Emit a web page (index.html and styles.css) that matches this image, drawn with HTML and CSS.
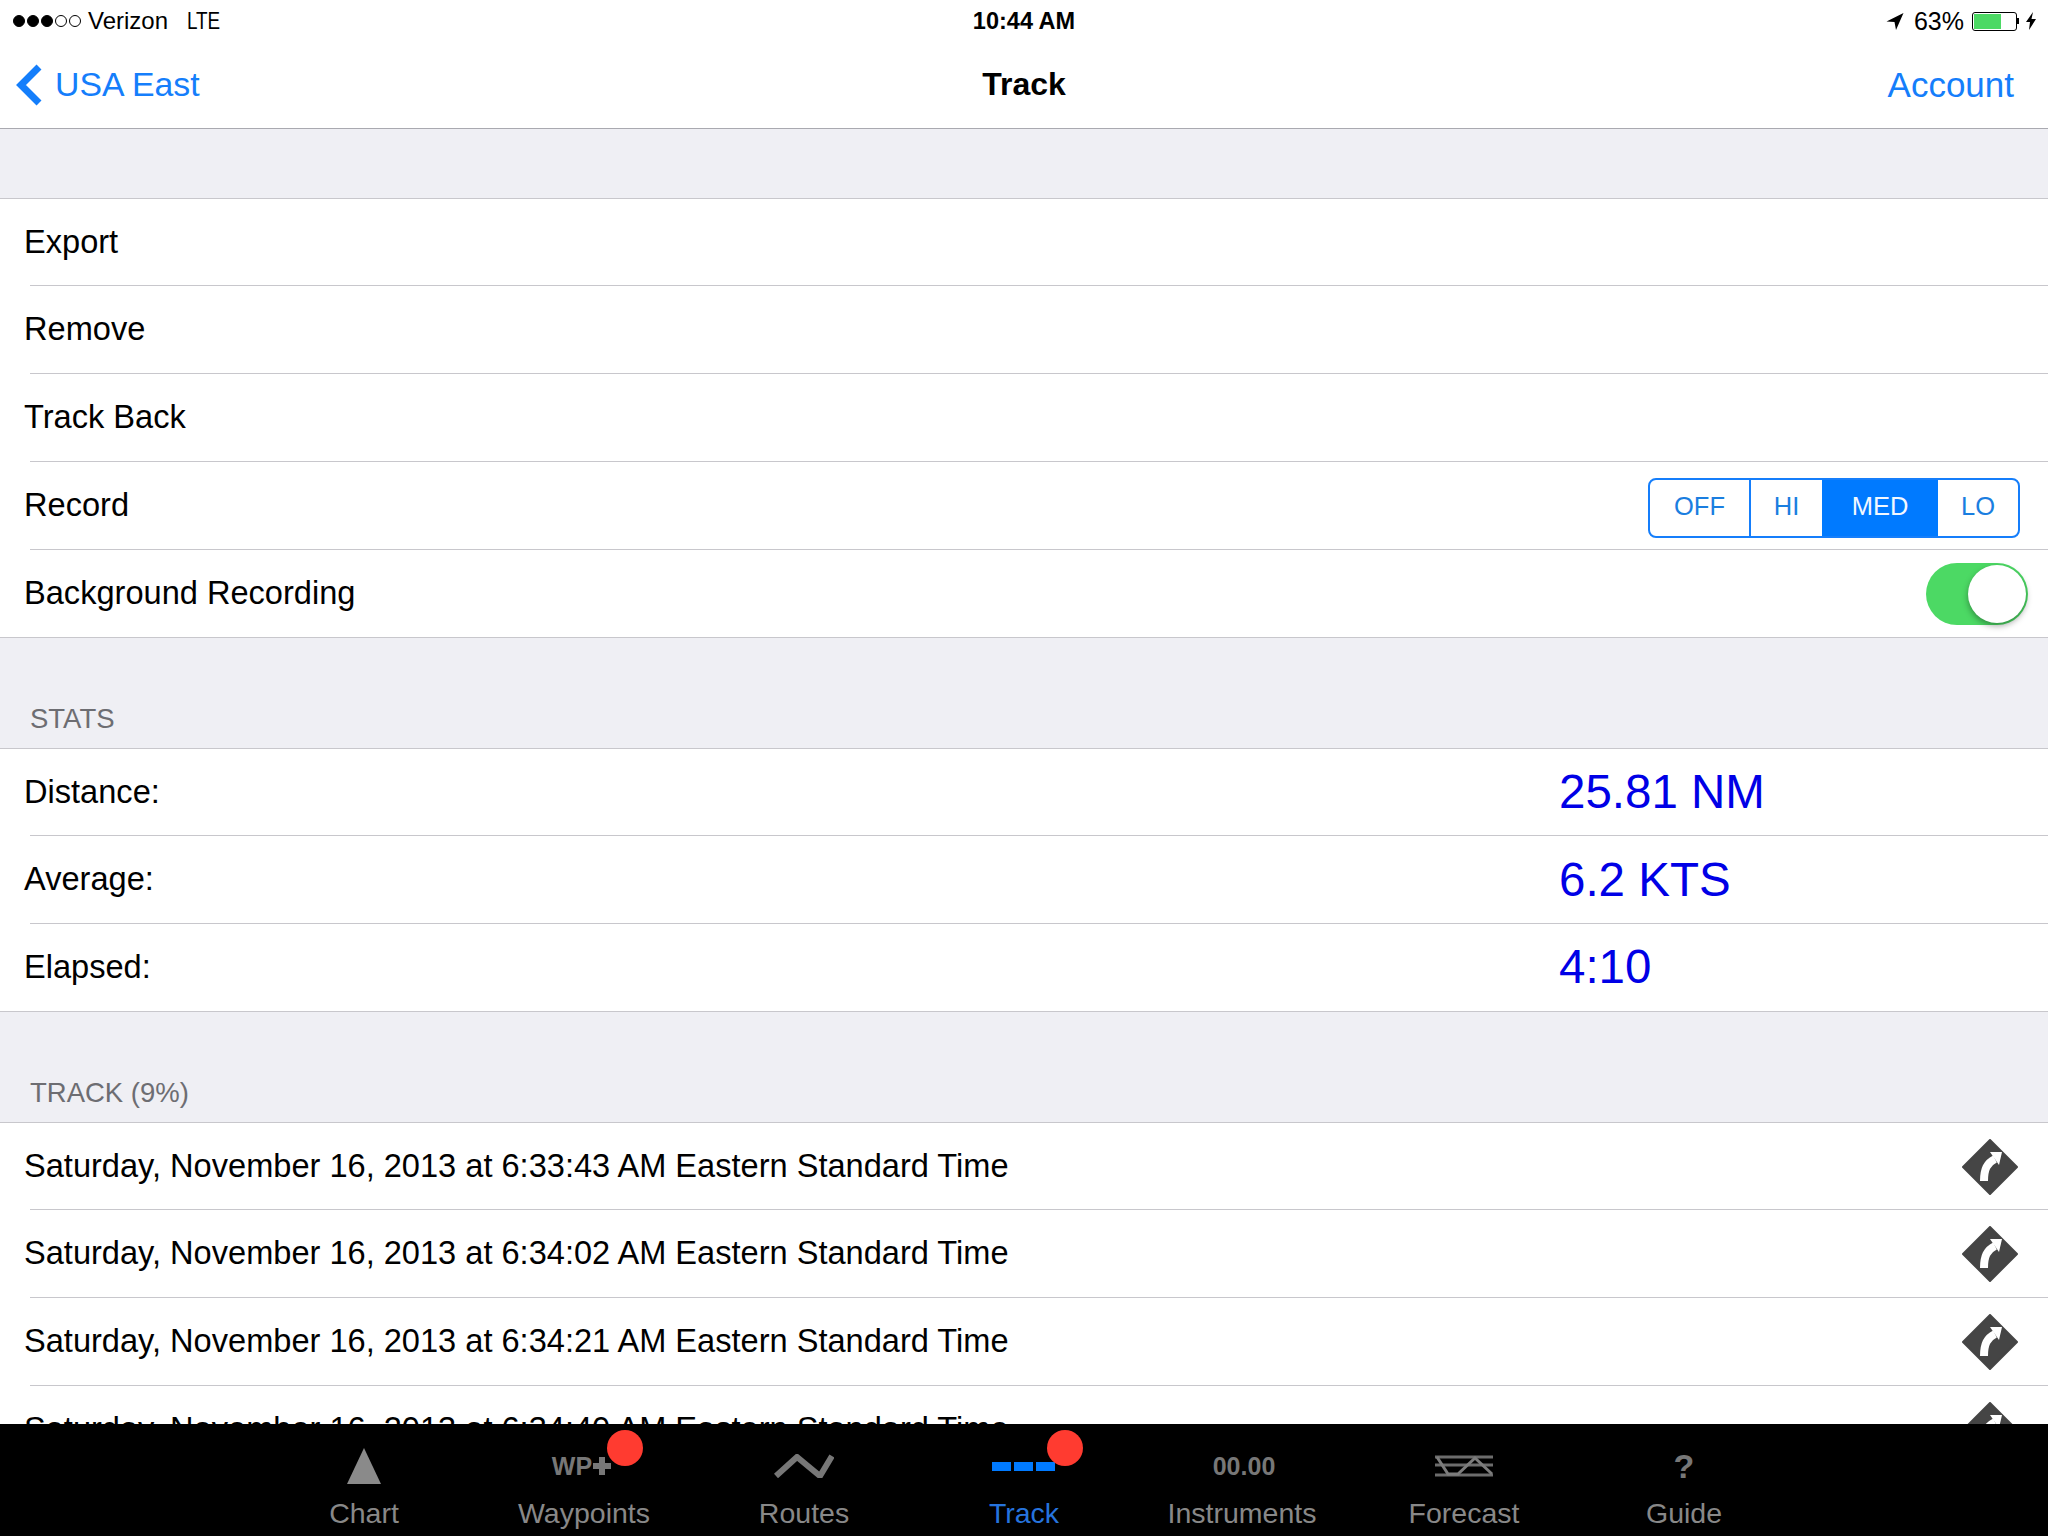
FILE: index.html
```html
<!DOCTYPE html>
<html lang="en">
<head>
<meta charset="utf-8">
<title>Track</title>
<link rel="stylesheet" href="styles.css">
</head>
<body>
<div class="app">
  <header class="top">
    <div class="status">
      <div class="status-left">
        <span class="signal"><i class="dot on"></i><i class="dot on"></i><i class="dot on"></i><i class="dot"></i><i class="dot"></i></span>
        <span class="carrier">Verizon</span>
        <span class="network">LTE</span>
      </div>
      <div class="status-time">10:44 AM</div>
      <div class="status-right">
        <svg class="loc" width="18" height="17" viewBox="0 0 17 17"><path d="M17 0 0 8.500 8 9 9.500 17Z"/></svg>
        <span class="pct">63%</span>
        <span class="battery"><span class="battery-fill"></span></span>
        <span class="nub"></span>
        <svg class="bolt" width="10" height="18" viewBox="0 0 10 18"><path d="M7 0 0 10h4l-1 8 7-11H5.500Z"/></svg>
      </div>
    </div>
    <nav class="nav">
      <div class="nav-back">
        <svg class="chevron" width="26" height="42" viewBox="0 0 26 42"><path d="M23 3 5 21l18 18" fill="none" stroke="#147efb" stroke-width="7"/></svg>
        <span class="nav-link">USA East</span>
      </div>
      <div class="nav-title">Track</div>
      <div class="nav-link nav-account">Account</div>
    </nav>
  </header>

  <main class="content">
    <div class="band"></div>
    <section class="group">
      <div class="row">Export</div>
      <div class="row">Remove</div>
      <div class="row">Track Back</div>
      <div class="row">Record
        <div class="segments">
          <span class="seg seg-off">OFF</span>
          <span class="seg seg-hi">HI</span>
          <span class="seg seg-med">MED</span>
          <span class="seg seg-lo">LO</span>
        </div>
      </div>
      <div class="row">Background Recording
        <div class="toggle"><span class="knob"></span></div>
      </div>
    </section>

    <h2 class="section-head">STATS</h2>
    <section class="group">
      <div class="row"><span class="stat-label">Distance:</span><span class="stat-value">25.81 NM</span></div>
      <div class="row"><span class="stat-label">Average:</span><span class="stat-value">6.2 KTS</span></div>
      <div class="row"><span class="stat-label">Elapsed:</span><span class="stat-value">4:10</span></div>
    </section>

    <h2 class="section-head">TRACK (9%)</h2>
    <section class="group">
      <div class="row">Saturday, November 16, 2013 at 6:33:43 AM Eastern Standard Time
        <svg class="turn" width="56" height="56" viewBox="0 0 56 56"><use href="#turn-icon"/></svg></div>
      <div class="row">Saturday, November 16, 2013 at 6:34:02 AM Eastern Standard Time
        <svg class="turn" width="56" height="56" viewBox="0 0 56 56"><use href="#turn-icon"/></svg></div>
      <div class="row">Saturday, November 16, 2013 at 6:34:21 AM Eastern Standard Time
        <svg class="turn" width="56" height="56" viewBox="0 0 56 56"><use href="#turn-icon"/></svg></div>
      <div class="row">Saturday, November 16, 2013 at 6:34:40 AM Eastern Standard Time
        <svg class="turn" width="56" height="56" viewBox="0 0 56 56"><use href="#turn-icon"/></svg></div>
    </section>
  </main>

  <footer class="tabbar">
    <div class="tab">
      <div class="tab-icon"><svg width="34" height="36" viewBox="0 0 34 36"><path d="M17 0 34 36H0Z" fill="#8a8a8a"/></svg></div>
      <span class="tab-label">Chart</span>
    </div>
    <div class="tab">
      <div class="tab-icon"><span class="wp">WP</span><svg class="wp-plus" width="18" height="18" viewBox="0 0 18 18"><path d="M6 0h6v6h6v6h-6v6H6v-6H0V6h6Z" fill="#777"/></svg></div>
      <span class="tab-label">Waypoints</span>
      <span class="badge"></span>
    </div>
    <div class="tab">
      <div class="tab-icon"><svg width="60" height="24" viewBox="0 0 60 24"><path d="M2 22 23 3l23 19L58 2" fill="none" stroke="#777" stroke-width="6"/></svg></div>
      <span class="tab-label">Routes</span>
    </div>
    <div class="tab tab-active">
      <div class="tab-icon"><span class="dashes"><i></i><i></i><i></i></span></div>
      <span class="tab-label">Track</span>
      <span class="badge"></span>
    </div>
    <div class="tab">
      <div class="tab-icon"><span class="digits">00.00</span></div>
      <span class="tab-label tab-label-instruments">Instruments</span>
    </div>
    <div class="tab">
      <div class="tab-icon"><svg width="58" height="24" viewBox="0 0 58 24"><path d="M0 3h58M0 11h58M0 21h58" fill="none" stroke="#6c6c6c" stroke-width="3"/><path d="M2 3 13 20h10L40 4l17 16" fill="none" stroke="#7c7c7c" stroke-width="3"/></svg></div>
      <span class="tab-label">Forecast</span>
    </div>
    <div class="tab">
      <div class="tab-icon"><span class="question">?</span></div>
      <span class="tab-label">Guide</span>
    </div>
  </footer>
</div>

<svg class="defs" width="0" height="0">
  <symbol id="turn-icon" viewBox="0 0 56 56">
    <path d="M28 1 55 28 28 55 1 28Z" fill="#454545" stroke="#454545" stroke-width="2" stroke-linejoin="round"/>
    <path d="M22 42C22 30 25 24 33 20" fill="none" stroke="#fff" stroke-width="8"/>
    <path d="M28 13 40 13 37 26Z" fill="#fff"/>
  </symbol>
</svg>
</body>
</html>
```

FILE: styles.css
```css
* { box-sizing: border-box; }
html, body { margin: 0; padding: 0; background: #fff; }
body { font-family: "Liberation Sans", Arial, sans-serif; color: #000; }
.defs { display: block; height: 0; }

.app { width: 2048px; height: 1536px; display: flex; flex-direction: column; overflow: hidden; background: #efeff4; }

.top { background: #fff; border-bottom: 1px solid #a9a9b0; height: 129px; flex: none; }

.status { height: 40px; padding-top: 2px; display: grid; grid-template-columns: 1fr auto 1fr; align-items: center; font-size: 25px; }
.status-left { display: flex; align-items: center; padding-left: 13px; }
.signal { display: flex; gap: 2px; margin-right: 7px; }
.dot { width: 12px; height: 12px; border-radius: 50%; border: 1px solid #000; }
.dot.on { background: #000; }
.carrier { font-size: 24px; }
.network { margin-left: 19px; font-size: 23px; transform: scaleX(.82); transform-origin: left center; }
.status-time { font-weight: 700; font-size: 23.500px; }
.status-right { display: flex; align-items: center; justify-content: flex-end; padding-right: 12px; }
.loc { margin-right: 10px; }
.pct { margin-right: 8px; }
.battery { width: 45px; height: 19px; border: 1px solid #000; border-radius: 3px; padding: 1px; display: block; }
.battery-fill { display: block; width: 27px; height: 15px; background: #4cd964; }
.nub { width: 2px; height: 6px; background: #000; margin-right: 7px; }

.nav { height: 88px; padding-top: 1px; display: grid; grid-template-columns: 1fr auto 1fr; align-items: center; }
.nav-back { display: flex; align-items: center; padding-left: 16px; gap: 13px; }
.nav-link { font-size: 33.800px; color: #157efb; }
.nav-account { font-size: 35px; text-align: right; padding-right: 34px; }
.nav-title { font-size: 32px; font-weight: 700; }

.content { flex: 1; min-height: 0; overflow: hidden; }
.band { height: 69px; }
.group { background: #fff; border-top: 1px solid #c8c7cc; border-bottom: 1px solid #c8c7cc; }
.row {
  height: 88px; padding: 0 20px 2px 24px; display: flex; align-items: center; justify-content: space-between;
  font-size: 32.600px; background: linear-gradient(#c8c7cc, #c8c7cc) 30px 100% / 100% 1px no-repeat;
}
.row:first-child { height: 87px; }
.row:last-child { height: 87px; background: none; }

.section-head { margin: 0; height: 110px; padding: 0 30px 13px; display: flex; align-items: flex-end; font-size: 27.500px; font-weight: 400; color: #6d6d72; }

.stat-label { flex: none; }
.stat-value { width: 469px; font-size: 47.500px; color: #0000e6; flex: none; }

.segments { display: flex; height: 60px; width: 372px; margin: 5px 8px 0 0; border: 2px solid #157efb; border-radius: 8px; overflow: hidden; font-size: 25.500px; color: #1a7ee0; }
.seg { display: flex; align-items: center; justify-content: center; padding-bottom: 2px; }
.seg-off { width: 101px; border-right: 2px solid #157efb; }
.seg-hi { width: 71px; }
.seg-med { width: 116px; background: #007aff; color: #f2f8ff; }
.seg-lo { flex: 1; }

.toggle { width: 102px; height: 62px; margin-top: 2px; border-radius: 31px; background: #4cd964; display: flex; align-items: center; justify-content: flex-end; padding-right: 2px; }
.knob { width: 58px; height: 58px; border-radius: 50%; background: #fff; box-shadow: 0 3px 6px rgba(0, 0, 0, .35); }

.turn { margin: 2px 10px 0 0; flex: none; }

.tabbar { height: 112px; flex: none; background: #000; display: flex; justify-content: center; }
.tab { width: 220px; position: relative; display: flex; flex-direction: column; align-items: center; color: #888; font-size: 28.500px; }
.tab-active { color: #2673dd; }
.tab-icon { height: 73px; padding: 16px 0 5px; display: flex; align-items: center; justify-content: center; flex: none; }
.tab-label { line-height: 32px; }
.tab-label-instruments { margin-right: 4px; }

.wp { font-size: 25px; font-weight: 700; color: #777; }
.wp-plus { margin: 0 5px 0 1px; }
.digits { font-size: 25px; font-weight: 700; color: #777; }
.question { font-size: 34px; font-weight: 700; color: #777; }
.dashes { display: flex; gap: 3px; padding-right: 2px; }
.dashes i { width: 19px; height: 9px; background: #007aff; display: block; }

.badge { position: absolute; top: 6px; left: 133px; width: 36px; height: 36px; border-radius: 50%; background: #ff3b30; }
```
